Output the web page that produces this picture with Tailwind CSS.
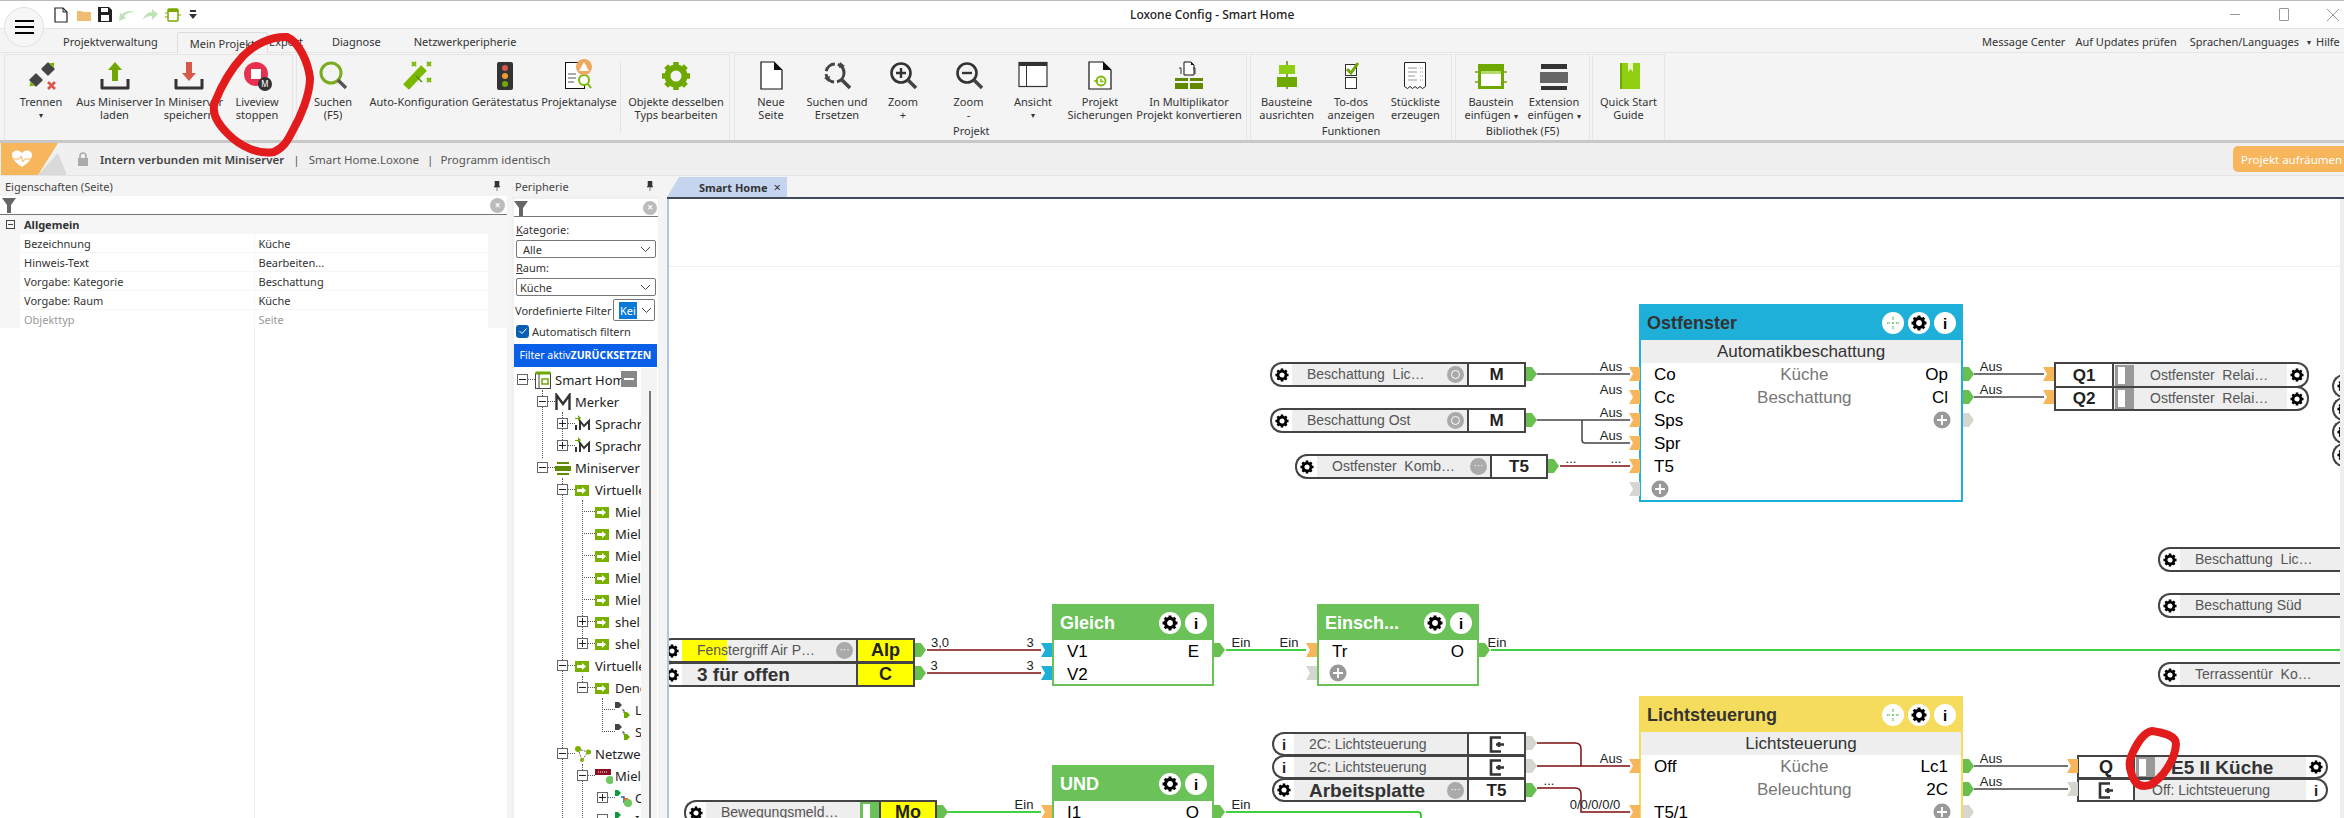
<!DOCTYPE html>
<html lang="de">
<head>
  <meta charset="UTF-8" />
  <title>Loxone Config - Smart Home</title>
  <script src="https://cdn.jsdelivr.net/npm/@tailwindcss/browser@4"></script>
</head>
<body class="relative w-[2344px] h-[818px] overflow-hidden bg-[#f4f4f4] text-[#333] text-[11px] leading-[13px] font-['Noto_Sans',sans-serif]">

  <svg class="hidden">
    <symbol id="gear" viewBox="0 0 24 24">
      <circle cx="12" cy="12" r="6.8" fill="none" stroke="currentColor" stroke-width="4.8"/>
      <g fill="currentColor">
        <rect x="9.8" y="0.8" width="4.4" height="4.4"/>
        <rect x="9.8" y="0.8" width="4.4" height="4.4" transform="rotate(45 12 12)"/>
        <rect x="9.8" y="0.8" width="4.4" height="4.4" transform="rotate(90 12 12)"/>
        <rect x="9.8" y="0.8" width="4.4" height="4.4" transform="rotate(135 12 12)"/>
        <rect x="9.8" y="0.8" width="4.4" height="4.4" transform="rotate(180 12 12)"/>
        <rect x="9.8" y="0.8" width="4.4" height="4.4" transform="rotate(225 12 12)"/>
        <rect x="9.8" y="0.8" width="4.4" height="4.4" transform="rotate(270 12 12)"/>
        <rect x="9.8" y="0.8" width="4.4" height="4.4" transform="rotate(315 12 12)"/>
      </g>
    </symbol>
  </svg>

  <!-- TITLE BAR -->
  <header class="h-[29px] flex items-center bg-white border-t border-b border-t-[#bbb] border-b-[#e6e6e6] pl-[54px]">
    <div class="w-[1076px] flex items-center gap-[7px]">
      <svg width="14" height="16" viewBox="0 0 14 16"><path d="M1 1h8l4 4v10H1z" fill="#fff" stroke="#222" stroke-width="1.2"/><path d="M9 1v4h4" fill="none" stroke="#222"/></svg>
      <svg width="14" height="12" viewBox="0 0 14 12" class="ml-[2px]"><path d="M0 2h5l1 1h8v9H0z" fill="#eebd72"/></svg>
      <svg width="14" height="15" viewBox="0 0 14 15"><path d="M0 0h11l3 3v12H0z" fill="#222"/><rect x="3" y="1" width="7" height="4" fill="#fff"/><rect x="3" y="8" width="8" height="6" fill="#fff"/></svg>
      <svg width="16" height="12" viewBox="0 0 16 12"><path d="M16 3C10 3 7 5 5 7L7 9l-7 3 1-8 2 1.500C6 2 11 1 16 3z" fill="#bfe3b8"/></svg>
      <svg width="16" height="12" viewBox="0 0 16 12"><path d="M1 11C2 6 6 3 10 3V0l6 5-6 6V7C6 7 3 8 1 11z" fill="#bfe3b8"/></svg>
      <svg width="16" height="14" viewBox="0 0 16 14"><rect x="3" y="1" width="10" height="12" rx="1" fill="#fff" stroke="#7aab00" stroke-width="1.5"/><rect x="3" y="1" width="10" height="3" fill="#7aab00"/><path d="M0 5h3M0 9h3M13 7h3" stroke="#7aab00"/></svg>
      <svg width="8" height="9" viewBox="0 0 8 9" class="ml-[1px]"><path d="M1 0h6v2H1zM0 4h8L4 9z" fill="#333"/></svg>
    </div>
    <div class="w-[151px] text-center text-[12px] font-medium text-[#222] whitespace-nowrap">Loxone Config - Smart Home</div>
    <div class="ml-auto flex items-center text-[#999]">
      <span class="w-[10px] h-px bg-[#999] mr-[39px]"></span>
      <span class="w-[10px] h-[13px] border border-[#999] rounded-[1px] mr-[37px]"></span>
      <svg width="14" height="14" viewBox="0 0 14 14" class="mr-[4px]"><path d="M1 1l12 12M13 1L1 13" stroke="#999"/></svg>
    </div>
  </header>

  <!-- HAMBURGER -->
  <div class="absolute left-[4px] top-[7px] w-[40px] h-[40px] rounded-full bg-[#f6f6f6] border border-[#e2e2e2] flex flex-col items-center justify-center gap-[4px]">
    <span class="w-[19px] h-[2px] bg-black"></span>
    <span class="w-[19px] h-[2px] bg-black"></span>
    <span class="w-[19px] h-[2px] bg-black"></span>
  </div>

  <!-- TABS -->
  <nav class="relative h-[24px] flex items-center text-[#333]">
    <span class="ml-[63px]">Projektverwaltung</span>
    <span class="ml-[19px] h-[21px] mt-[3px] px-[12px] flex items-center bg-[#f4f4f4] border border-b-0 border-[#ddd] rounded-t-[3px]">Mein Projekt</span>
    <span class="ml-[1px]">Export</span>
    <span class="ml-[29px]">Diagnose</span>
    <span class="ml-[33px]">Netzwerkperipherie</span>
    <div class="ml-auto flex items-center whitespace-nowrap">
      <span class="mr-[10px]">Message Center</span>
      <span class="mr-[13px]">Auf Updates prüfen</span>
      <span class="mr-[8px]">Sprachen/Languages</span>
      <span class="mr-[5px] text-[8px]">▾</span>
      <span class="w-[28px] overflow-hidden">Hilfe</span>
    </div>
  </nav>

  <!-- RIBBON -->
  <section class="h-[90px] flex pl-[4px] border-b-[3px] border-[#c8c8c8] shadow-[0_-1px_0_#e6e6e6] text-center">
    <div class="w-[289px] mt-[1px] border border-b-0 border-[#e6e6e6] flex items-start">
      <div class="w-[72px] flex flex-col items-center whitespace-nowrap pt-[4px]">
        <svg width="36" height="32" viewBox="0 0 36 32" class="mb-[4px]"><g transform="translate(25 10) rotate(-45)"><rect x="-5" y="-5" width="10" height="10" rx="1" fill="#444"/><path d="M5-3l4 3-4 3z" fill="#7ab800"/></g><g transform="translate(13 21) rotate(-45)"><rect x="-5" y="-5" width="10" height="10" rx="1" fill="#444"/><path d="M-5-3l-4 3 4 3z" fill="#7ab800"/></g><path d="M25 23l7 7M32 23l-7 7" stroke="#d9574a" stroke-width="2.6"/></svg>
        Trennen<span class="text-[8px] leading-[13px]">▾</span>
      </div>
      <div class="w-[75px] flex flex-col items-center whitespace-nowrap pt-[4px]">
        <svg width="36" height="32" viewBox="0 0 36 32" class="mb-[4px]"><path d="M18 3l7 8h-4v11h-6V11h-4z" fill="#6fa800"/><path d="M5 20v9h26v-9" fill="none" stroke="#333" stroke-width="3" stroke-linejoin="round"/></svg>
        Aus Miniserver<br>laden
      </div>
      <div class="w-[74px] flex flex-col items-center whitespace-nowrap pt-[4px]">
        <svg width="36" height="32" viewBox="0 0 36 32" class="mb-[4px]"><path d="M15 3h6v11h4l-7 8-7-8h4z" fill="#d9574a"/><path d="M5 20v9h26v-9" fill="none" stroke="#333" stroke-width="3" stroke-linejoin="round"/></svg>
        In Miniserver<br>speichern
      </div>
      <div class="w-[62px] flex flex-col items-center whitespace-nowrap pt-[4px]">
        <svg width="36" height="32" viewBox="0 0 36 32" class="mb-[4px]"><circle cx="17" cy="15" r="12" fill="#e8304f"/><rect x="12" y="10" width="10" height="10" fill="#fff"/><circle cx="26" cy="25" r="7" fill="#333"/><text x="26" y="28" text-anchor="middle" fill="#fff" font-size="8">M</text></svg>
        Liveview<br>stoppen
      </div>
    </div>

    <div class="w-[434px] ml-[3px] mt-[1px] border border-b-0 border-[#e6e6e6] flex items-start">
      <div class="w-[72px] flex flex-col items-center whitespace-nowrap pt-[4px]">
        <svg width="36" height="32" viewBox="0 0 36 32" class="mb-[4px]"><circle cx="16" cy="14" r="10" fill="none" stroke="#7bab1e" stroke-width="3"/><path d="M23 21l8 8" stroke="#555" stroke-width="3.4"/></svg>
        Suchen<br>(F5)
      </div>
      <div class="w-[100px] flex flex-col items-center whitespace-nowrap pt-[4px]">
        <svg width="36" height="32" viewBox="0 0 36 32" class="mb-[4px]"><path d="M5 28L23 9" stroke="#7ab800" stroke-width="8"/><path d="M15 17l6 6" stroke="#5f8a00" stroke-width="1.5"/><path d="M11 3l4 4M15 3l-4 4M26 3l4 4M30 3l-4 4M26 19l4 4M30 19l-4 4" stroke="#7ab800" stroke-width="2"/></svg>
        Auto-Konfiguration
      </div>
      <div class="w-[72px] flex flex-col items-center whitespace-nowrap pt-[4px]">
        <svg width="36" height="32" viewBox="0 0 36 32" class="mb-[4px]"><rect x="10" y="3" width="16" height="28" rx="2" fill="#333"/><circle cx="18" cy="9" r="3" fill="#d9574a"/><circle cx="18" cy="17" r="3" fill="#f09a30"/><circle cx="18" cy="25" r="3" fill="#6fa800"/></svg>
        Gerätestatus
      </div>
      <div class="w-[76px] flex flex-col items-center whitespace-nowrap pt-[4px]">
        <svg width="36" height="32" viewBox="0 0 36 32" class="mb-[4px]"><rect x="4.5" y="3.5" width="19" height="26" fill="#fff" stroke="#111"/><path d="M7 15h8M7 19h8M7 23h6" stroke="#555"/><circle cx="23" cy="21" r="5" fill="#fff" stroke="#7ab800" stroke-width="2"/><path d="M27 25l3 4" stroke="#7ab800" stroke-width="2"/><circle cx="23" cy="8" r="8" fill="#f0a860"/><path d="M23 3l5 9h-10z" fill="#fff"/></svg>
        Projektanalyse
      </div>
      <div class="w-px h-[70px] mt-[7px] ml-[3px] bg-[#e2e2e2]"></div>
      <div class="w-[96px] ml-[7px] flex flex-col items-center whitespace-nowrap pt-[4px]">
        <svg width="36" height="32" viewBox="0 0 36 32" class="mb-[4px]"><use href="#gear" x="3" y="2" width="30" height="30" class="text-[#6fa800]"/></svg>
        Objekte desselben<br>Typs bearbeiten
      </div>
    </div>

    <div class="w-[513px] ml-[4px] mt-[1px] border border-b-0 border-[#e6e6e6] flex flex-col">
      <div class="h-[72px] flex items-start">
        <div class="w-[72px] flex flex-col items-center whitespace-nowrap pt-[4px]">
          <svg width="36" height="32" viewBox="0 0 36 32" class="mb-[4px]"><path d="M8 3h13l8 8v19H8z" fill="#fff" stroke="#111" stroke-width="1.2"/><path d="M21 3l8 8h-8z" fill="#111"/></svg>
          Neue<br>Seite
        </div>
        <div class="w-[60px] flex flex-col items-center whitespace-nowrap pt-[4px]">
          <svg width="36" height="32" viewBox="0 0 36 32" class="mb-[4px]"><circle cx="16" cy="14" r="9" fill="none" stroke="#444" stroke-width="3" stroke-dasharray="12 3"/><path d="M23 21l8 8" stroke="#444" stroke-width="3.6"/><path d="M21 3l5 4-6 2zM5 19l6-2-1 6z" fill="#444"/></svg>
          Suchen und<br>Ersetzen
        </div>
        <div class="w-[72px] flex flex-col items-center whitespace-nowrap pt-[4px]">
          <svg width="36" height="32" viewBox="0 0 36 32" class="mb-[4px]"><circle cx="16" cy="14" r="9.5" fill="none" stroke="#333" stroke-width="2.6"/><path d="M23 21l8 8" stroke="#444" stroke-width="3.6"/><path d="M11 14h10M16 9v10" stroke="#333" stroke-width="2.4"/></svg>
          Zoom<br>+
        </div>
        <div class="w-[59px] flex flex-col items-center whitespace-nowrap pt-[4px]">
          <svg width="36" height="32" viewBox="0 0 36 32" class="mb-[4px]"><circle cx="16" cy="14" r="9.5" fill="none" stroke="#333" stroke-width="2.6"/><path d="M23 21l8 8" stroke="#444" stroke-width="3.6"/><path d="M11 14h10" stroke="#333" stroke-width="2.4"/></svg>
          Zoom<br>-
        </div>
        <div class="w-[70px] flex flex-col items-center whitespace-nowrap pt-[4px]">
          <svg width="36" height="32" viewBox="0 0 36 32" class="mb-[4px]"><rect x="4" y="3.5" width="28" height="24" fill="#fff" stroke="#333" stroke-width="1.2"/><rect x="4" y="3" width="28" height="4" fill="#333"/><path d="M11.5 7v20" stroke="#333"/></svg>
          Ansicht<span class="text-[8px] leading-[13px]">▾</span>
        </div>
        <div class="w-[64px] flex flex-col items-center whitespace-nowrap pt-[4px]">
          <svg width="36" height="32" viewBox="0 0 36 32" class="mb-[4px]"><path d="M7 3h14l8 8v19H7z" fill="#fff" stroke="#111" stroke-width="1.2"/><path d="M21 3l8 8h-8z" fill="#111"/><circle cx="19" cy="22" r="4.5" fill="none" stroke="#7ab800" stroke-width="1.8"/><path d="M19 19.5v3h2.5M12 22h4" stroke="#7ab800" stroke-width="1.4" fill="none"/></svg>
          Projekt<br>Sicherungen
        </div>
        <div class="w-[114px] flex flex-col items-center whitespace-nowrap pt-[4px]">
          <svg width="36" height="32" viewBox="0 0 36 32" class="mb-[4px]"><path d="M13 3h7l3 3v10H13z" fill="#fff" stroke="#111"/><path d="M20 3l3 3h-3z" fill="#111"/><path d="M11 15v-6h-2M25 15v-6h-2" transform="translate(-1 0)" fill="none" stroke="#333"/><path d="M4 19h13v3H4zM4 24h13v6H4zM19 19h13v3H19zM19 24h13v6H19z" fill="#5f8a00"/></svg>
          In Multiplikator<br>Projekt konvertieren
        </div>
      </div>
      <div class="h-[14px] pl-[218px] -mt-[3px] text-left text-[#333]">Projekt</div>
    </div>

    <div class="w-[202px] ml-[3px] mt-[1px] border border-b-0 border-[#e6e6e6] flex flex-col">
      <div class="h-[72px] flex items-start">
        <div class="w-[72px] flex flex-col items-center whitespace-nowrap pt-[4px]">
          <svg width="36" height="32" viewBox="0 0 36 32" class="mb-[4px]"><path d="M18 2v28" stroke="#5f8a00" stroke-width="1.5"/><rect x="10" y="6" width="16" height="9" fill="#8fce10"/><rect x="8" y="18" width="20" height="10" fill="#6fa800"/></svg>
          Bausteine<br>ausrichten
        </div>
        <div class="w-[58px] flex flex-col items-center whitespace-nowrap pt-[4px]">
          <svg width="36" height="32" viewBox="0 0 36 32" class="mb-[4px]"><rect x="12.5" y="5.5" width="11" height="11" fill="#fff" stroke="#333"/><rect x="12.5" y="18.5" width="11" height="11" fill="#fff" stroke="#333"/><path d="M14 10l4 4 7-10" fill="none" stroke="#6fa800" stroke-width="3"/></svg>
          To-dos<br>anzeigen
        </div>
        <div class="w-[72px] flex flex-col items-center whitespace-nowrap pt-[4px]">
          <svg width="36" height="32" viewBox="0 0 36 32" class="mb-[4px]"><path d="M7.5 3.5h21v24l-3 2-2.500-2-2.500 2-2.500-2-2.500 2-2.500-2-2.500 2-3-2z" fill="#fff" stroke="#222"/><path d="M11 9h9M11 13h9M11 17h7M11 21h9" stroke="#999"/><path d="M23 9h3M23 13h3M23 17h3M23 21h3" stroke="#999" stroke-dasharray="1 1"/></svg>
          Stückliste<br>erzeugen
        </div>
      </div>
      <div class="h-[14px] -mt-[3px] text-center">Funktionen</div>
    </div>

    <div class="w-[135px] ml-[3px] mt-[1px] border border-b-0 border-[#e6e6e6] flex flex-col">
      <div class="h-[72px] flex items-start">
        <div class="w-[70px] flex flex-col items-center whitespace-nowrap pt-[4px]">
          <svg width="36" height="32" viewBox="0 0 36 32" class="mb-[4px]"><rect x="6.500" y="6.500" width="23" height="22" fill="#fff" stroke="#6fa800" stroke-width="3"/><rect x="6" y="6" width="24" height="7" fill="#6fa800"/><rect x="8" y="12" width="20" height="3" fill="#b5d96a"/><path d="M2 13h4M2 23h4M30 13h4M30 23h4" stroke="#6fa800" stroke-width="1.5"/></svg>
          Baustein<br><span>einfügen <span class="text-[8px]">▾</span></span>
        </div>
        <div class="w-[56px] flex flex-col items-center whitespace-nowrap pt-[4px]">
          <svg width="36" height="32" viewBox="0 0 36 32" class="mb-[4px]"><rect x="5" y="5" width="26" height="5" fill="#333"/><rect x="4" y="13" width="28" height="11" fill="#666"/><rect x="5" y="27" width="26" height="4" fill="#333"/></svg>
          Extension<br><span>einfügen <span class="text-[8px]">▾</span></span>
        </div>
      </div>
      <div class="h-[14px] -mt-[3px] text-center whitespace-nowrap">Bibliothek (F5)</div>
    </div>

    <div class="w-[73px] ml-[2px] mt-[1px] border border-b-0 border-[#e6e6e6] flex flex-col items-center whitespace-nowrap pt-[4px]">
      <svg width="36" height="32" viewBox="0 0 36 32" class="mb-[4px]"><path d="M9 4h20v26H9z" fill="#8fce10"/><path d="M17 4h5v9l-2.500-3-2.500 3z" fill="#eaf5c8"/><path d="M9 4h2v26H9z" fill="#6fa800"/></svg>
      Quick Start<br>Guide
    </div>
  </section>

  <!-- STATUS BAR -->
  <section class="h-[33px] flex items-center bg-[#f0f0f0] border-b border-[#e4e4e4] whitespace-nowrap text-[11.5px]">
    <svg width="66" height="32" viewBox="0 0 66 32" class="shrink-0"><path d="M58 10l9 22H38z" fill="#d9d9d9"/><path d="M1 0h57L38 32H1z" fill="#f7b55c"/><path d="M22 24c-6-4-10-8-10-12 0-5 7-6 10-2 3-4 10-3 10 2 0 4-4 8-10 12z" fill="#fff"/><path d="M13 16h6l2-3 2 6 2-3h6" fill="none" stroke="#f7b55c"/></svg>
    <svg width="12" height="14" viewBox="0 0 12 14" class="ml-[11px] shrink-0"><rect x="1" y="6" width="10" height="8" fill="#aaa"/><path d="M3 6V4a3 3 0 016 0v2" fill="none" stroke="#aaa" stroke-width="1.6"/></svg>
    <span class="ml-[11px] font-semibold text-[#444]">Intern verbunden mit Miniserver</span>
    <span class="ml-[9px] text-[#555]">|</span>
    <span class="ml-[9px] text-[#555]">Smart Home.Loxone</span>
    <span class="ml-[8px] text-[#555]">|</span>
    <span class="ml-[7px] text-[#555]">Programm identisch</span>
    <div class="ml-auto w-[111px] h-[26px] pl-[8px] flex items-center bg-[#f7b55c] text-white rounded-l-[5px] overflow-hidden">Projekt aufräumen</div>
  </section>

  <main class="h-[642px] flex">
    <!-- EIGENSCHAFTEN -->
    <aside class="w-[507px] flex flex-col">
      <div class="h-[20px] flex items-center justify-between px-[5px] pr-[6px]">
        <span class="text-[#444]">Eigenschaften (Seite)</span>
        <svg width="8" height="10" viewBox="0 0 8 10"><path d="M2 0h4v5l1 1H1l1-1zM4 6v4" fill="#333" stroke="#333" stroke-width=".6"/></svg>
      </div>
      <div class="h-[19px] flex items-center justify-between bg-white border-b border-[#777] px-[2px] pr-[2px]">
        <svg width="15" height="16" viewBox="0 0 15 16"><path d="M0 1h14L9 8v8H5V8z" fill="#666"/></svg>
        <span class="w-[15px] h-[15px] rounded-full bg-[#bbb] text-white text-[10px] leading-[14px] text-center font-bold">×</span>
      </div>
      <div class="flex-1 relative bg-white">
        <div class="bg-[#f6f6f6]">
          <div class="h-[19px] flex items-center">
            <span class="ml-[6px] w-[9px] h-[9px] border border-[#444] flex items-center justify-center"><i class="block w-[5px] h-px bg-[#444]"></i></span>
            <b class="ml-[9px] text-[#333] font-bold">Allgemein</b>
          </div>
          <div class="ml-[20px] w-[468px] grid grid-cols-2 gap-y-[1px] gap-x-[1px] text-[#333]">
            <div class="h-[18px] bg-white pl-[4px] flex items-center">Bezeichnung</div><div class="h-[18px] bg-white pl-[4px] flex items-center">Küche</div>
            <div class="h-[18px] bg-white pl-[4px] flex items-center">Hinweis-Text</div><div class="h-[18px] bg-white pl-[4px] flex items-center">Bearbeiten...</div>
            <div class="h-[18px] bg-white pl-[4px] flex items-center">Vorgabe: Kategorie</div><div class="h-[18px] bg-white pl-[4px] flex items-center">Beschattung</div>
            <div class="h-[18px] bg-white pl-[4px] flex items-center">Vorgabe: Raum</div><div class="h-[18px] bg-white pl-[4px] flex items-center">Küche</div>
            <div class="h-[18px] bg-white pl-[4px] flex items-center text-[#999]">Objekttyp</div><div class="h-[18px] bg-white pl-[4px] flex items-center text-[#999]">Seite</div>
          </div>
        </div>
        <i class="absolute left-[254px] top-[113px] bottom-0 w-px bg-[#eee]"></i>
      </div>
    </aside>

    <!-- PERIPHERIE -->
    <aside class="w-[155px] ml-[5px] flex flex-col">
      <div class="h-[20px] flex items-center justify-between pl-[3px] pr-[13px]">
        <span class="text-[#444]">Peripherie</span>
        <svg width="8" height="10" viewBox="0 0 8 10"><path d="M2 0h4v5l1 1H1l1-1zM4 6v4" fill="#333" stroke="#333" stroke-width=".6"/></svg>
      </div>
      <div class="flex-1 relative w-[146px] bg-white border-l-2 border-t-[3px] border-[#f0f0f0] overflow-hidden whitespace-nowrap">
        <div class="h-[18px] flex items-center justify-between border-b border-[#777] pr-[1px]">
          <svg width="15" height="16" viewBox="0 0 15 16"><path d="M0 1h14L9 8v8H5V8z" fill="#666"/></svg>
          <span class="w-[14px] h-[14px] rounded-full bg-[#bbb] text-white text-[10px] leading-[13px] text-center font-bold">×</span>
        </div>
        <div class="mt-[6px] pl-[2px] h-[15px]"><u>K</u>ategorie:</div>
        <div class="mt-[2px] ml-[2px] w-[140px] h-[18px] pl-[6px] pr-[5px] flex items-center justify-between border border-[#777] rounded-[2px]">Alle<svg width="9" height="5" viewBox="0 0 9 5"><path d="M0 0l4.500 4.500L9 0" fill="none" stroke="#444"/></svg></div>
        <div class="mt-[3px] pl-[2px] h-[15px]"><u>R</u>aum:</div>
        <div class="mt-[2px] ml-[2px] w-[140px] h-[18px] pl-[3px] pr-[5px] flex items-center justify-between border border-[#777] rounded-[2px]">Küche<svg width="9" height="5" viewBox="0 0 9 5"><path d="M0 0l4.500 4.500L9 0" fill="none" stroke="#444"/></svg></div>
        <div class="mt-[3px] h-[22px] flex items-center pl-[1px]">
          <span class="w-[98px]">Vordefinierte Filter</span>
          <span class="w-[42px] h-[22px] pl-[5px] pr-[3px] flex items-center justify-between border border-[#777] rounded-[2px]"><span class="bg-[#0a78d7] text-white h-[17px] px-[1px] leading-[17px]">Kei</span><svg width="9" height="5" viewBox="0 0 9 5"><path d="M0 0l4.500 4.500L9 0" fill="none" stroke="#444"/></svg></span>
        </div>
        <div class="mt-[3px] h-[14px] flex items-center gap-[3px] pl-[2px]">
          <span class="w-[13px] h-[13px] bg-[#0a5fb4] rounded-[3px] flex items-center justify-center"><svg width="8" height="6" viewBox="0 0 8 6"><path d="M.5 3l2.500 2.500L7.500.5" fill="none" stroke="#fff"/></svg></span>
          Automatisch filtern
        </div>
        <div class="mt-[6px] h-[23px] w-[143px] flex items-center justify-center bg-[#0a5fe8] text-white text-[10.5px]">Filter aktiv<b>ZURÜCKSETZEN</b></div>
        <div id="tree" class="absolute left-0 top-[169px] w-[127px] bottom-0 overflow-hidden text-[13px] text-[#222]"></div>
        <i class="absolute left-[127px] top-[169px] bottom-0 w-[16px] bg-[#f4f4f4]"></i>
        <i class="absolute left-[135px] top-[192px] bottom-0 w-[2px] bg-[#777]"></i>
        <span class="absolute left-[107px] top-[172px] w-[16px] h-[16px] bg-[#888] flex items-center justify-center"><i class="w-[10px] h-[2px] bg-white"></i></span>
      </div>
    </aside>

    <!-- CANVAS -->
    <section class="flex-1 flex flex-col min-w-0">
      <div class="h-[21px] flex items-end">
        <div class="w-[120px] h-[20px] pl-[32px] pr-[6px] flex items-center justify-between whitespace-nowrap bg-[#c6d5ef] font-bold [clip-path:polygon(12px_0,100%_0,100%_100%,0_100%)]">Smart Home<span class="font-normal text-[13px]">×</span></div>
      </div>
      <div class="h-[2px] bg-[#3f4a5a]"></div>
      <div id="canvas" class="relative flex-1 bg-white border-l-2 border-[#b7c4de] border-r-4 border-r-[#eee] overflow-hidden font-['Liberation_Sans',sans-serif]">
        <i class="absolute left-0 right-0 top-[67px] h-px bg-[#eee]"></i>
      </div>
    </section>
  </main>

  <!-- RED MARKER ANNOTATIONS -->
  <svg class="absolute inset-0 z-50 pointer-events-none" width="2344" height="818" viewBox="0 0 2344 818" fill="none" stroke="#e21c1c" stroke-width="8" stroke-linecap="round">
    <path d="M243 56C255 44 272 36 287 37 299 42 308 62 310 78 310 95 300 118 293 130 287 142 283 148 274 152 258 155 240 146 228 134 216 122 211 112 215 102 222 84 232 68 243 56"/>
    <path d="M2131 757C2136 744 2144 732 2152 731 2165 733 2176 736 2176 744 2175 760 2163 778 2150 785 2140 788 2134 784 2131 772 2129 766 2129 762 2131 757"/>
  </svg>

  <script>
    // project tree, rows are 22px apart
    const treeRows = [
      [0,'-','home','Smart Home'],[1,'-','m','Merker'],[2,'+','ms','Sprachr'],[2,'+','ms','Sprachr'],
      [1,'-','srv','Miniserver'],[2,'-','arrow','Virtuelle'],[3,'','arrow','Miele'],[3,'','arrow','Miele'],
      [3,'','arrow','Miele'],[3,'','arrow','Miele'],[3,'','arrow','Miele'],[3,'+','arrow','shelly'],
      [3,'+','arrow','shelly'],[2,'-','arrow','Virtuelle'],[3,'-','arrow','Denon'],[4,'','conn','Licht'],
      [4,'','conn','Status'],[2,'-','net','Netzwerk'],[3,'-','miele','Miele'],[4,'+','conn2','O'],[4,'-','conn2','I']
    ];
    const treeIcons = {
      home: '<svg width="16" height="18" viewBox="0 0 16 18"><rect x=".5" y="2.500" width="15" height="15" fill="#fff" stroke="#444"/><rect x=".5" y=".5" width="15" height="3" fill="#6fa800"/><path d="M4 3v14" stroke="#444"/><rect x="7" y="8" width="6" height="5" fill="none" stroke="#6fa800" stroke-width="1.5"/></svg>',
      m: '<svg width="16" height="18" viewBox="0 0 16 18"><path d="M1.500 17V2l6.500 9 6.500-9v15" fill="none" stroke="#333" stroke-width="2.400"/></svg>',
      ms: '<svg width="16" height="18" viewBox="0 0 16 18"><path d="M5 15V6l4 5 5-5v9" fill="none" stroke="#333" stroke-width="2"/><path d="M0 3h3V0l3 3-3 3V4H0z" fill="#6fa800"/><path d="M1 10v5" stroke="#333" stroke-width="2"/></svg>',
      srv: '<svg width="16" height="14" viewBox="0 0 16 14"><path d="M2 1h12v2H2zM0 5h16v5H0zM2 12h12v2H2z" fill="#5f8a00"/></svg>',
      arrow: '<svg width="14" height="11" viewBox="0 0 14 11"><rect width="14" height="11" fill="#7ab000"/><path d="M2 4h5V2l4 3.500L7 9V7H2z" fill="#fff"/></svg>',
      conn: '<svg width="16" height="18" viewBox="0 0 16 18"><path d="M0 1h4l3 3-3 3H0z" fill="#444"/><path d="M7 9h2v3" fill="none" stroke="#444"/><path d="M9 11h3l3 3-3 3H9z" fill="#6fa800"/></svg>',
      net: '<svg width="16" height="16" viewBox="0 0 16 16"><path d="M3 3l10 3-6 8z" fill="none" stroke="#666" stroke-dasharray="2 1"/><circle cx="3" cy="3" r="3" fill="#7ab000"/><circle cx="13.500" cy="6" r="2.500" fill="#7ab000"/><circle cx="7" cy="14" r="2" fill="#7ab000"/></svg>',
      miele: '<svg width="18" height="18" viewBox="0 0 18 18"><rect width="16" height="6" y="2" fill="#8b0f1f"/><path d="M3 5h10" stroke="#fff" stroke-dasharray="1 1"/><circle cx="15" cy="13" r="4" fill="#6cc860"/></svg>',
      conn2: '<svg width="18" height="18" viewBox="0 0 18 18"><path d="M0 1h3l3 3-3 3H0z" fill="#0a9a3a"/><path d="M6 8h3v6" fill="none" stroke="#1a5fb0" stroke-width="1.500"/><rect x="9" y="9" width="4" height="4" fill="#f06020"/><circle cx="13" cy="14" r="4" fill="#6cc860"/></svg>'
    };
    const treeLines = [[28,22,68],[48,44,34],[48,110,340],[68,132,142],[68,308,12],[68,396,54],[88,330,34]];
    let treeHtml = treeLines.map(([x,y,h]) => `<i class="absolute border-l border-dotted border-[#555]" style="left:${x}px;top:${y}px;height:${h}px"></i>`).join('');
    treeRows.forEach(([lvl, sign, icon, text], i) => {
      const boxX = 8 + 20 * lvl;
      const top = i * 22 + 1;
      const box = sign
        ? `<span class="absolute top-[5px] w-[11px] h-[11px] bg-white border border-[#666] flex items-center justify-center" style="left:${boxX - 5}px"><i class="absolute w-[7px] h-px bg-[#222]"></i>${sign === '+' ? '<i class="absolute w-px h-[7px] bg-[#222]"></i>' : ''}</span>`
        : '';
      treeHtml += `<div class="absolute left-0 h-[22px] w-full" style="top:${top}px">
        <i class="absolute top-[10px] w-[13px] border-t border-dotted border-[#555]" style="left:${boxX}px"></i>${box}
        <span class="absolute top-[2px] h-[18px] flex items-center bg-white" style="left:${boxX + 13}px">${treeIcons[icon]}</span>
        <span class="absolute top-[2px] h-[18px] flex items-center" style="left:${boxX + 33}px">${text}</span>
      </div>`;
    });
    document.getElementById('tree').innerHTML = treeHtml;

    // function block diagram. Coordinates below are page coordinates.
    const OX = 669, OY = 199;
    const place = (x, y, w, h) => `left:${x - OX}px;top:${y - OY}px;width:${w}px;height:${h}px`;
    const endCap = (kind) => kind === 'i'
      ? '<b class="text-[15px] text-[#222]">i</b>'
      : '<svg width="14" height="14" viewBox="0 0 24 24"><use href="#gear" class="text-black"/></svg>';
    const statusDot = (kind) => kind === 'o'
      ? '<span class="w-[17px] h-[17px] mr-[3px] rounded-full bg-[#aaa] flex items-center justify-center shrink-0"><i class="w-[9px] h-[9px] rounded-full border border-white"></i></span>'
      : kind === 'm'
        ? '<span class="w-[17px] h-[17px] mr-[3px] rounded-full bg-[#aaa] text-white text-[10px] leading-[15px] text-center shrink-0">···</span>'
        : '';
    const toggle = (on) => `<span class="w-[19px] h-[21px] shrink-0 ${on ? 'bg-[#6ac259]' : 'bg-[#999]'}"><i class="block ml-[3px] mt-[2px] w-[7px] h-[17px] bg-white"></i></span>`;
    const exitIcon = '<svg width="16" height="17" viewBox="0 0 16 17"><path d="M12 1.500H2v14h10M7 8.500h8M10 6v5" fill="none" stroke="#333" stroke-width="2.600"/></svg>';

    // single io node; side 'l' has the cap at the left and the cell at the right
    function ioNode(o) {
      const wrap = o.side === 'l'
        ? 'rounded-l-[12px] border-l-2 flex-row'
        : 'rounded-r-[12px] border-r-2 flex-row-reverse';
      const textCls = o.bold ? 'text-[19px] font-bold text-[#333]' : 'text-[14px] text-[#555]';
      const cellBg = o.yellow ? 'bg-[#ffff00]' : 'bg-white';
      const cell = o.cellIcon ? exitIcon : `<b class="${o.cellSize === 'l' ? 'text-[18px]' : 'text-[17px]'} text-[#222]">${o.cell}</b>`;
      return `<div class="absolute flex items-stretch bg-white border-y-2 border-[#444] overflow-hidden whitespace-pre ${wrap}" style="${place(o.x, o.y, o.w, o.h || 25)}">
        <span class="w-[20px] shrink-0 flex items-center justify-center">${endCap(o.cap)}</span>
        <span class="flex-1 min-w-0 relative flex items-center bg-[#eee] ${o.side === 'l' ? 'pl-[15px]' : 'pl-[1px]'}">
          ${o.side === 'r' && o.toggle ? toggle(false) : ''}
          ${o.hl ? '<i class="absolute left-0 top-0 bottom-0 w-[45px] bg-[#ffff00]"></i>' : ''}
          <span class="relative flex-1 min-w-0 ${textCls} ${o.side === 'r' ? 'pl-[16px]' : ''}">${o.text}</span>
          ${statusDot(o.dot)}${o.side === 'l' && o.toggle ? toggle(true) : ''}
        </span>
        <span class="shrink-0 flex items-center justify-center ${cellBg} ${o.side === 'l' ? 'border-l-2' : 'border-r-2'} border-[#444] ${o.side === 'r' ? 'border-l-2' : 'border-r-2'}" style="width:${o.cellW}px">${cell}</span>
      </div>`;
    }

    const circleBtn = (inner) => `<span class="w-[22px] h-[22px] rounded-full bg-white flex items-center justify-center">${inner}</span>`;
    const moveIcon = '<svg width="14" height="14" viewBox="0 0 14 14"><path d="M7 1v3M7 10v3M1 7h3M10 7h3" stroke="#5fc060" stroke-width="1.500" stroke-dasharray="1.500 .7"/><circle cx="7" cy="7" r="1" fill="#5fc060"/></svg>';
    const infoIcon = '<b class="text-[15px] text-black">i</b>';
    const gearBtn = '<svg width="16" height="16" viewBox="0 0 24 24"><use href="#gear" class="text-black"/></svg>';

    function block(o) {
      const rows = (col, cls) => `<div class="flex flex-col ${cls}">${col.map(t => `<span class="h-[23px] leading-[23px]">${t}</span>`).join('')}</div>`;
      const titleCls = o.dark ? 'text-[#333]' : 'text-white';
      return `<div class="absolute bg-white border-2 ${o.border}" style="${place(o.x, o.y, o.w, o.h)}">
        <div class="h-[34px] flex items-center pl-[6px] pr-[5px] gap-[4px] ${o.head}">
          <b class="flex-1 text-[18px] ${titleCls}">${o.title}</b>
          ${o.move ? circleBtn(moveIcon) : ''}${circleBtn(gearBtn)}${circleBtn(infoIcon)}
        </div>
        ${o.sub ? `<div class="h-[23px] bg-[#eee] text-center text-[17px] leading-[23px] text-[#333]">${o.sub}</div>` : ''}
        <div class="flex justify-between px-[13px] text-[17px] text-black">
          ${rows(o.left, '')}
          ${o.mid ? rows(o.mid, 'items-center text-[#777]') : ''}
          ${rows(o.right, 'items-end')}
        </div>
      </div>`;
    }

    let html = '';
    html += ioNode({side:'l', x:1270, y:362, w:256, cap:'g', text:'Beschattung  Lic…', dot:'o', cell:'M', cellW:59});
    html += ioNode({side:'l', x:1270, y:408, w:256, cap:'g', text:'Beschattung Ost', dot:'o', cell:'M', cellW:59});
    html += ioNode({side:'l', x:1295, y:454, w:253, cap:'g', text:'Ostfenster  Komb…', dot:'m', cell:'T5', cellW:58});
    html += ioNode({side:'r', x:2054, y:362, w:255, h:26, cap:'g', text:'Ostfenster  Relai…', toggle:true, cell:'Q1', cellW:60});
    html += ioNode({side:'r', x:2054, y:386, w:255, h:25, cap:'g', text:'Ostfenster  Relai…', toggle:true, cell:'Q2', cellW:60});
    [374, 397, 420, 443].forEach(y => {
      html += ioNode({side:'l', x:2332, y:y, w:60, h:24, cap:'g', text:'', cell:'', cellW:10});
    });
    html += ioNode({side:'l', x:2158, y:547, w:250, cap:'g', text:'Beschattung  Lic…', cell:'M', cellW:59});
    html += ioNode({side:'l', x:2158, y:593, w:250, cap:'g', text:'Beschattung Süd', cell:'M', cellW:59});
    html += ioNode({side:'l', x:2158, y:662, w:250, cap:'g', text:'Terrassentür  Ko…', cell:'T5', cellW:59});
    html += ioNode({side:'l', x:660, y:638, w:255, cap:'g', hl:true, text:'Fenstergriff Air P…', dot:'m', cell:'Alp', cellW:59, yellow:true, cellSize:'l'});
    html += ioNode({side:'l', x:660, y:662, w:255, cap:'g', bold:true, text:'3 für offen', cell:'C', cellW:59, yellow:true, cellSize:'l'});
    html += ioNode({side:'l', x:684, y:800, w:253, cap:'g', text:'Bewegungsmeld…', toggle:true, cell:'Mo', cellW:58, yellow:true, cellSize:'l'});
    html += ioNode({side:'l', x:1272, y:732, w:254, h:24, cap:'i', text:'2C: Lichtsteuerung', cellIcon:true, cellW:59});
    html += ioNode({side:'l', x:1272, y:755, w:254, h:24, cap:'i', text:'2C: Lichtsteuerung', cellIcon:true, cellW:59});
    html += ioNode({side:'l', x:1272, y:778, w:254, h:24, cap:'g', bold:true, text:'Arbeitsplatte', dot:'m', cell:'T5', cellW:59});
    html += ioNode({side:'r', x:2077, y:755, w:251, h:24, cap:'g', bold:true, text:'E5 II Küche', toggle:true, cell:'Q', cellW:58, cellSize:'l'});
    html += ioNode({side:'r', x:2077, y:778, w:251, h:24, cap:'i', text:'Off: Lichtsteuerung', cellIcon:true, cellW:58});

    html += block({x:1639, y:304, w:324, h:198, border:'border-[#1fb0da]', head:'bg-[#1fb0da]', dark:true, move:true, title:'Ostfenster', sub:'Automatikbeschattung',
      left:['Co','Cc','Sps','Spr','T5'], mid:['Küche','Beschattung'], right:['Op','Cl']});
    html += block({x:1052, y:604, w:162, h:82, border:'border-[#6ac259]', head:'bg-[#6ac259]', title:'Gleich', left:['V1','V2'], right:['E']});
    html += block({x:1317, y:604, w:162, h:82, border:'border-[#6ac259]', head:'bg-[#6ac259]', title:'Einsch...', left:['Tr'], right:['O']});
    html += block({x:1052, y:765, w:162, h:82, border:'border-[#6ac259]', head:'bg-[#6ac259]', title:'UND', left:['I1'], right:['O']});
    html += block({x:1639, y:696, w:324, h:198, border:'border-[#f5dc5c]', head:'bg-[#f5dc5c]', dark:true, move:true, title:'Lichtsteuerung', sub:'Lichtsteuerung',
      left:['Off','&nbsp;','T5/1'], mid:['Küche','Beleuchtung'], right:['Lc1','2C']});

    // wires, ports and their labels drawn on top
    const inPort = (x, y, c) => `<path d="M${x} ${y-7}h11v14h-11l4-7z" fill="${c}"/>`;
    const outPort = (x, y, c) => `<path d="M${x} ${y-7}h6l5 7-5 7h-6z" fill="${c}"/>`;
    const wire = (d, c) => `<path d="${d}" fill="none" stroke="${c}" stroke-width="1.500"/>`;
    const label = (x, y, t) => `<text x="${x}" y="${y}" text-anchor="middle" fill="#222" font-size="13">${t}</text>`;
    const plus = (x, y) => `<circle cx="${x}" cy="${y}" r="8.500" fill="#999"/><path d="M${x-5} ${y}h10M${x} ${y-5}v10" stroke="#fff" stroke-width="1.800"/>`;
    const OR = '#f7b55c', GR = '#69c050', BL = '#1fb0da', GY = '#d6d6d0', DK = '#444', RD = '#7a0c0c', LN = '#00c000';

    let svg = '';
    svg += wire('M1537 374H1630', DK) + wire('M1537 420H1630', DK) + wire('M1582 420v20q0 3 3 3H1630', DK) + wire('M1560 466H1630', RD);
    svg += wire('M1974 374H2044', DK) + wire('M1974 397H2044', DK);
    svg += wire('M927 650H1041', RD) + wire('M927 673H1041', RD) + wire('M1226 650H1306', LN) + wire('M1491 650H2340', LN);
    svg += wire('M947 812H1041', LN) + wire('M1226 812H1418q3 0 3 3v10', LN);
    svg += wire('M1537 743H1575q6 0 6 6v17M1537 766H1630', RD) + wire('M1537 788H1575q6 0 6 6v18H1630', RD);
    svg += wire('M1974 766H2068', DK) + wire('M1974 789H2068', DK);

    [374,397,420,443,466].forEach(y => { svg += inPort(1629, y, OR); });
    svg += inPort(1629, 489, GY) + plus(1660, 489);
    svg += outPort(1963, 374, GR) + outPort(1963, 397, GR) + outPort(1963, 420, GY) + plus(1942, 420);
    svg += outPort(1526, 374, GR) + outPort(1526, 420, GR) + outPort(1548, 466, GR);
    svg += inPort(2043, 374, OR) + inPort(2043, 397, OR);
    svg += outPort(915, 650, GR) + outPort(915, 673, GR);
    svg += inPort(1041, 650, BL) + inPort(1041, 673, BL);
    svg += outPort(1214, 650, GR) + inPort(1306, 650, OR) + inPort(1306, 673, GY) + plus(1338, 673) + outPort(1479, 650, GR);
    svg += outPort(937, 812, GR) + inPort(1041, 812, OR) + outPort(1214, 812, GR);
    svg += outPort(1526, 743, GY) + outPort(1526, 766, GY) + outPort(1526, 790, GR);
    svg += inPort(1629, 766, OR) + inPort(1629, 812, OR);
    svg += outPort(1963, 766, GR) + outPort(1963, 789, GR) + outPort(1963, 812, GY) + plus(1942, 812);
    svg += inPort(2067, 766, OR) + inPort(2067, 789, GY);

    svg += label(1611, 371, 'Aus') + label(1611, 394, 'Aus') + label(1611, 417, 'Aus') + label(1611, 440, 'Aus');
    svg += label(1991, 371, 'Aus') + label(1991, 394, 'Aus');
    svg += label(1571, 463, '...') + label(1616, 463, '...');
    svg += label(940, 647, '3,0') + label(1030, 647, '3') + label(934, 670, '3') + label(1030, 670, '3');
    svg += label(1241, 647, 'Ein') + label(1289, 647, 'Ein') + label(1497, 647, 'Ein');
    svg += label(1024, 809, 'Ein') + label(1241, 809, 'Ein');
    svg += label(1611, 763, 'Aus') + label(1549, 785, '...') + label(1595, 809, '0/0/0/0/0');
    svg += label(1991, 763, 'Aus') + label(1991, 786, 'Aus');

    document.getElementById('canvas').insertAdjacentHTML('beforeend', html +
      `<svg class="absolute left-0 top-0" width="1671" height="619" viewBox="${OX} ${OY} 1671 619">${svg}</svg>`);
  </script>
</body>
</html>
